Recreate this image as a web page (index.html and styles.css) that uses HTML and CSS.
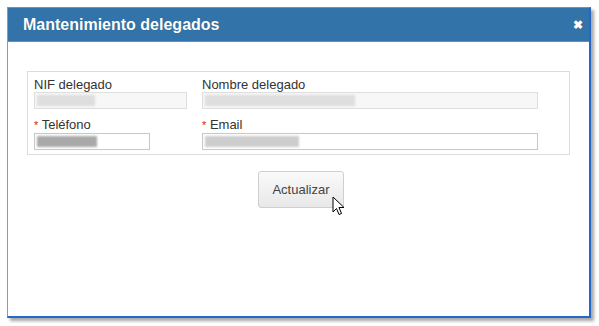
FILE: index.html
```html
<!DOCTYPE html>
<html lang="es">
<head>
  <meta charset="UTF-8">
  <title>Mantenimiento delegados</title>
  <link rel="stylesheet" href="styles.css">
</head>
<body>
  <div class="window">
    <div class="header">
      <span class="title">Mantenimiento delegados</span>
      <span class="close">&#10006;</span>
    </div>
    <div class="content">
      <div class="fieldset">
        <div class="field">
          <label>NIF delegado</label>
          <div class="input readonly">
            <span class="blur b-light" style="width:58px"></span>
          </div>
        </div>
        <div class="field">
          <label>Nombre delegado</label>
          <div class="input readonly">
            <span class="blur b-light" style="width:150px"></span>
          </div>
        </div>
        <div class="field">
          <label><span class="req">*</span> Teléfono</label>
          <div class="input short">
            <span class="blur b-dark" style="width:60px"></span>
          </div>
        </div>
        <div class="field">
          <label><span class="req">*</span> Email</label>
          <div class="input">
            <span class="blur b-mid" style="width:94px"></span>
          </div>
        </div>
      </div>
      <div class="actions">
        <button class="btn">Actualizar</button>
      </div>
    </div>
    <svg class="cursor" width="14" height="21" viewBox="0 0 14 21">
      <path d="M1 1 L1 16 L4.5 12.5 L7 18.5 L9.5 17.5 L7 11.5 L12 11.5 Z" fill="#fff" stroke="#000" stroke-width="1"/>
    </svg>
  </div>
</body>
</html>
```

FILE: styles.css
```css
body {
  margin: 0;
  padding: 7px;
  background: #fff;
  font-family: "Liberation Sans", Arial, sans-serif;
}

.window {
  position: relative;
  width: 584px;
  height: 311px;
  box-sizing: border-box;
  background: #fff;
  border: 2px solid #2467c9;
  border-left: 1px solid #6f9fd9;
  border-top: 1px solid #5f93d6;
  box-shadow: 3px 3px 3px rgba(0, 0, 0, 0.35);
}

.header {
  height: 33px;
  background: #3274a9;
  border-bottom: 1px solid #5c8fc0;
  display: flex;
  align-items: center;
  justify-content: space-between;
  padding: 0 6px 0 15px;
}

.title {
  color: #fff;
  font-weight: bold;
  font-size: 16px;
  text-shadow: 0 0 1px rgba(0, 0, 0, 0.3);
}

.close {
  color: #fff;
  font-size: 12px;
  font-weight: bold;
}

.content {
  padding: 29px 0 0 19px;
}

.fieldset {
  width: 543px;
  height: 84px;
  box-sizing: border-box;
  border: 1px solid #dcdcdc;
  padding: 5px 6px;
  display: grid;
  grid-template-columns: 153px 336px;
  column-gap: 15px;
  row-gap: 8px;
  align-content: start;
}

.field label {
  display: block;
  font-size: 13px;
  line-height: 15px;
  color: #333;
}

.req {
  color: #e02020;
  font-size: 11px;
}

.input {
  height: 17px;
  box-sizing: border-box;
  border: 1px solid #c8c8c8;
  background: #fff;
  display: flex;
  align-items: center;
  padding-left: 2px;
  overflow: hidden;
}

.input.short {
  width: 116px;
}

.input.readonly {
  background: #f7f7f7;
  border-color: #dedede;
}

.blur {
  display: block;
  height: 11px;
  filter: blur(1px);
}

.b-light {
  background: #dedede;
}

.b-mid {
  background: #cdcdcd;
}

.b-dark {
  background: #a9a9a9;
}

.actions {
  display: flex;
  padding: 16px 0 0 231px;
}

.btn {
  width: 86px;
  height: 37px;
  font-family: "Liberation Sans", Arial, sans-serif;
  font-size: 13px;
  color: #444;
  background: linear-gradient(#fafafa, #e8e8e8);
  border: 1px solid #cfcfcf;
  border-radius: 3px;
}

.cursor {
  position: absolute;
  left: 324px;
  top: 188px;
}
```
